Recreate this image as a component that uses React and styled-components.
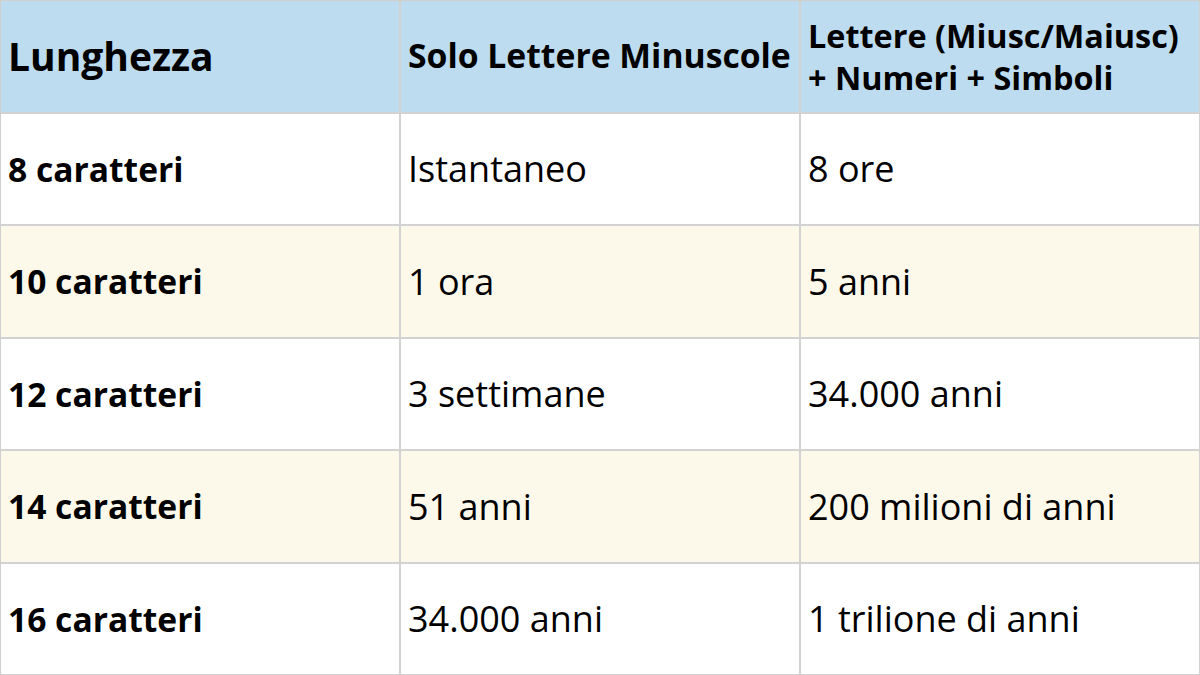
import React from "react";
import styled, { createGlobalStyle } from "styled-components";

const GlobalStyle = createGlobalStyle`
  html, body {
    margin: 0;
    padding: 0;
    background: #ffffff;
  }
  body {
    font-family: "Open Sans", "Noto Sans", sans-serif;
    color: #000;
  }
`;

const rows = [
  ["8 caratteri", "Istantaneo", "8 ore"],
  ["10 caratteri", "1 ora", "5 anni"],
  ["12 caratteri", "3 settimane", "34.000 anni"],
  ["14 caratteri", "51 anni", "200 milioni di anni"],
  ["16 caratteri", "34.000 anni", "1 trilione di anni"],
];

const App = () => {
  return (
    <>
      <GlobalStyle />
      <Table>
        <HeadCell $size={39}>Lunghezza</HeadCell>
        <HeadCell $size={33.7}>Solo Lettere Minuscole</HeadCell>
        <HeadCell $size={32.4}>
          Lettere (Miusc/Maiusc)
          <br />+ Numeri + Simboli
        </HeadCell>
        {rows.map((row, i) =>
          row.map((text, j) => (
            <Cell key={`${i}-${j}`} $shaded={i % 2 === 1} $bold={j === 0}>
              {text}
            </Cell>
          ))
        )}
      </Table>
    </>
  );
};

export default App;

const Table = styled.div`
  display: grid;
  grid-template-columns: 400px 400px 400px;
  grid-template-rows: repeat(6, 112.5px);
  width: 1200px;
  height: 675px;
  border-top: 1px solid #cfcfcf;
  border-left: 1px solid #cfcfcf;
  box-sizing: border-box;
  overflow: hidden;
`;

const CellBase = styled.div`
  display: flex;
  align-items: center;
  padding: 0 7px;
  border-right: 2px solid #d2d2d2;
  border-bottom: 2px solid #d2d2d2;
  box-sizing: border-box;
  white-space: nowrap;
`;

const HeadCell = styled(CellBase)`
  background: #bddcef;
  font-weight: 700;
  font-size: ${(p) => p.$size}px;
  line-height: 1.3;
`;

const Cell = styled(CellBase)`
  background: ${(p) => (p.$shaded ? "#fdf9ea" : "#ffffff")};
  font-weight: ${(p) => (p.$bold ? 700 : 400)};
  font-size: ${(p) => (p.$bold ? 33.6 : 36)}px;
`;
